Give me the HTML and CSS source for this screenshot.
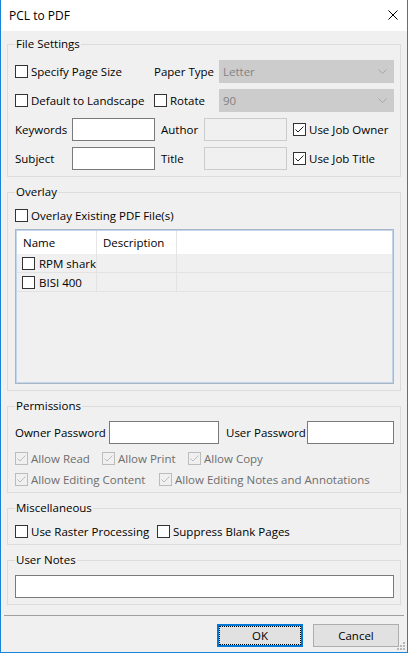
FILE: index.html
```html
<!DOCTYPE html>
<html>
<head>
<meta charset="utf-8">
<title>PCL to PDF</title>
<link rel="stylesheet" href="styles.css">
</head>
<body>
<div class="window">
  <div class="titlebar">
    <span class="title">PCL to PDF</span>
    <svg class="close" width="10" height="10" viewBox="0 0 10 10"><path d="M0.5 0.5 L9.5 9.5 M9.5 0.5 L0.5 9.5" stroke="#000" stroke-width="1" fill="none"/></svg>
  </div>
  <div class="client">
    <fieldset class="group g1">
      <legend>File Settings</legend>
      <div class="rows r1">
        <div class="row">
          <label class="chk w139"><span class="cb"></span><span>Specify Page Size</span></label>
          <span class="lbl w65">Paper Type</span>
          <div class="combo"><span>Letter</span><svg width="9" height="5" viewBox="0 0 9 5"><path d="M0.5 0.5 L4.5 4.5 L8.5 0.5" stroke="#a6a6a6" fill="none"/></svg></div>
        </div>
        <div class="row">
          <label class="chk w139"><span class="cb"></span><span>Default to Landscape</span></label>
          <label class="chk w65"><span class="cb"></span><span>Rotate</span></label>
          <div class="combo"><span>90</span><svg width="9" height="5" viewBox="0 0 9 5"><path d="M0.5 0.5 L4.5 4.5 L8.5 0.5" stroke="#a6a6a6" fill="none"/></svg></div>
        </div>
        <div class="row">
          <span class="lbl w57">Keywords</span>
          <div class="tb w83"></div>
          <span class="lbl w43 ml6">Author</span>
          <div class="tb w83 dis"></div>
          <label class="chk ml6"><span class="cb"><svg width="11" height="11" viewBox="0 0 11 11"><path d="M1.5 5.5 L4 8 L9.5 2.5" stroke="#222" fill="none"/></svg></span><span>Use Job Owner</span></label>
        </div>
        <div class="row">
          <span class="lbl w57">Subject</span>
          <div class="tb w83"></div>
          <span class="lbl w43 ml6">Title</span>
          <div class="tb w83 dis"></div>
          <label class="chk ml6"><span class="cb"><svg width="11" height="11" viewBox="0 0 11 11"><path d="M1.5 5.5 L4 8 L9.5 2.5" stroke="#222" fill="none"/></svg></span><span>Use Job Title</span></label>
        </div>
      </div>
    </fieldset>

    <fieldset class="group g2">
      <legend>Overlay</legend>
      <div class="rows r2">
        <div class="crow">
          <label class="chk"><span class="cb"></span><span>Overlay Existing PDF File(s)</span></label>
        </div>
        <div class="list">
          <div class="list-inner">
            <div class="lv-head">
              <div class="cell c1">Name</div>
              <div class="cell c2">Description</div>
              <div class="cell c3"></div>
            </div>
            <div class="lv-row">
              <div class="cell c1"><span class="cb"></span><span>RPM shark</span></div>
              <div class="cell c2"></div>
              <div class="cell c3"></div>
            </div>
            <div class="lv-row">
              <div class="cell c1"><span class="cb"></span><span>BISI 400</span></div>
              <div class="cell c2"></div>
              <div class="cell c3"></div>
            </div>
          </div>
        </div>
      </div>
    </fieldset>

    <fieldset class="group g3">
      <legend>Permissions</legend>
      <div class="rows r3">
        <div class="row">
          <span class="lbl w94">Owner Password</span>
          <div class="tb w110"></div>
          <span class="lbl w81 ml7">User Password</span>
          <div class="tb grow"></div>
        </div>
        <div class="crow first">
          <label class="chk dis w87"><span class="cb"><svg width="11" height="11" viewBox="0 0 11 11"><path d="M1.5 5.5 L4 8 L9.5 2.5" stroke="#bcbcbc" fill="none"/></svg></span><span>Allow Read</span></label>
          <label class="chk dis w86"><span class="cb"><svg width="11" height="11" viewBox="0 0 11 11"><path d="M1.5 5.5 L4 8 L9.5 2.5" stroke="#bcbcbc" fill="none"/></svg></span><span>Allow Print</span></label>
          <label class="chk dis"><span class="cb"><svg width="11" height="11" viewBox="0 0 11 11"><path d="M1.5 5.5 L4 8 L9.5 2.5" stroke="#bcbcbc" fill="none"/></svg></span><span>Allow Copy</span></label>
        </div>
        <div class="crow second">
          <label class="chk dis w144"><span class="cb"><svg width="11" height="11" viewBox="0 0 11 11"><path d="M1.5 5.5 L4 8 L9.5 2.5" stroke="#bcbcbc" fill="none"/></svg></span><span>Allow Editing Content</span></label>
          <label class="chk dis"><span class="cb"><svg width="11" height="11" viewBox="0 0 11 11"><path d="M1.5 5.5 L4 8 L9.5 2.5" stroke="#bcbcbc" fill="none"/></svg></span><span>Allow Editing Notes and Annotations</span></label>
        </div>
      </div>
    </fieldset>

    <fieldset class="group g4">
      <legend>Miscellaneous</legend>
      <div class="rows r4">
        <div class="crow">
          <label class="chk w142"><span class="cb"></span><span>Use Raster Processing</span></label>
          <label class="chk"><span class="cb"></span><span>Suppress Blank Pages</span></label>
        </div>
      </div>
    </fieldset>

    <fieldset class="group g5">
      <legend>User Notes</legend>
      <div class="rows r5">
        <div class="tb full"></div>
      </div>
    </fieldset>

    <div class="separator"></div>

    <div class="buttons">
      <button class="btn default">OK</button>
      <button class="btn">Cancel</button>
    </div>
  </div>
  <svg class="grip" width="8" height="8" viewBox="0 0 8 8">
    <rect x="6" y="0" width="2" height="2" fill="#b8b8b8"/>
    <rect x="3" y="3" width="2" height="2" fill="#b8b8b8"/>
    <rect x="6" y="3" width="2" height="2" fill="#b8b8b8"/>
    <rect x="0" y="6" width="2" height="2" fill="#b8b8b8"/>
    <rect x="3" y="6" width="2" height="2" fill="#b8b8b8"/>
    <rect x="6" y="6" width="2" height="2" fill="#b8b8b8"/>
  </svg>
</div>
</body>
</html>
```

FILE: styles.css
```css
* { box-sizing: border-box; }
html, body { margin: 0; padding: 0; }
body {
  width: 408px;
  height: 653px;
  overflow: hidden;
  font-family: "Open Sans", "Noto Sans", sans-serif;
  font-size: 11.5px;
  color: #000;
  background: #f0f0f0;
}
.window {
  position: relative;
  width: 408px;
  height: 653px;
  border: 1px solid #1883d7;
  border-top: none;
  background: #f0f0f0;
  display: flex;
  flex-direction: column;
}
.titlebar {
  height: 31px;
  flex: none;
  background: #fff;
  display: flex;
  align-items: center;
  justify-content: space-between;
  padding: 0 9px 0 8px;
  font-size: 12px;
}
.close { display: block; margin-top: -1px; }
.client { display: flex; flex-direction: column; }

.group {
  margin: 7px 6px 0;
  padding: 0 6px 6px 7px;
  border: 1px solid #dcdcdc;
  min-width: 0;
}
.g1 { margin-top: 5px; }
.g3, .g4 { padding-bottom: 4px; }
.group legend {
  padding: 0 1px;
  margin: 0;
  height: 16px;
  line-height: 16px;
}
.rows { display: flex; flex-direction: column; }
.r1 { padding-top: 8px; gap: 6px; }
.r2 { padding-top: 6px; }
.r3 { padding-top: 7px; }
.r4 { padding-top: 6px; }
.r5 { padding-top: 7px; }

.row { display: flex; align-items: center; height: 23px; }
.crow { display: flex; align-items: center; height: 18px; }
.r3 .crow.first { margin-top: 5px; }
.r3 .crow.second { margin-top: 3px; }

.lbl { white-space: nowrap; flex: none; }
.chk { display: flex; align-items: center; white-space: nowrap; flex: none; }
.chk .cb { margin-right: 3px; }
.chk.dis { color: #6d6d6d; }

.cb {
  display: inline-flex;
  flex: none;
  width: 13px;
  height: 13px;
  border: 1px solid #333;
  background: #fff;
}
.cb svg { display: block; }
.chk.dis .cb { border-color: #bcbcbc; background: #f0f0f0; }

.w139 { width: 139px; }
.w65 { width: 65px; }
.w57 { width: 57px; }
.w83 { width: 83px; }
.w43 { width: 43px; }
.w94 { width: 94px; }
.w110 { width: 110px; }
.w81 { width: 81px; }
.w87 { width: 87px; }
.w86 { width: 86px; }
.w144 { width: 144px; }
.w142 { width: 142px; }
.ml6 { margin-left: 6px; }
.ml7 { margin-left: 7px; }
.grow { flex: 1; }

.combo {
  flex: 1;
  height: 23px;
  background: #cccccc;
  border: 1px solid #cccccc;
  color: #838383;
  display: flex;
  align-items: center;
  justify-content: space-between;
  padding: 0 6px 0 3px;
}
.combo svg { display: block; }

.tb {
  flex: none;
  height: 23px;
  border: 1px solid #7a7a7a;
  background: #fff;
}
.tb.dis { background: #f0f0f0; border-color: #cccccc; }
.tb.grow { flex: 1; }
.tb.full { width: 100%; }

.list {
  margin-top: 5px;
  height: 155px;
  border: 1px solid #a9b6c6;
}
.list-inner {
  height: 100%;
  border: 1px solid #c3d5ec;
  background: #f0f0f0;
}
.lv-head, .lv-row {
  display: grid;
  grid-template-columns: 80px 80px 1fr;
}
.lv-head { height: 23px; background: #fff; }
.lv-head .cell { border-right: 1px solid #e5e5e5; padding-left: 6px; }
.lv-head .c3 { border-right: none; }
.lv-row { height: 19px; border-bottom: 1px solid #e3e3e3; }
.lv-row .cell { border-right: 1px solid #e3e3e3; }
.lv-row .c3 { border-right: none; }
.cell { display: flex; align-items: center; overflow: hidden; white-space: nowrap; }
.lv-row .c1 { padding-left: 5px; }
.lv-row .c1 .cb { margin-right: 4px; }

.separator {
  margin: 10px 3px 0;
  height: 1px;
  background: #a0a0a0;
}
.buttons {
  display: flex;
  justify-content: flex-end;
  gap: 10px;
  padding-right: 8px;
  margin-top: 8px;
}
.btn {
  width: 86px;
  height: 23px;
  font-family: "Open Sans", "Noto Sans", sans-serif;
  font-size: 11.5px;
  color: #000;
  background: #e1e1e1;
  border: 1px solid #adadad;
  padding: 0;
  margin: 0;
}
.btn.default {
  border: 2px solid #0078d7;
  outline: 1px dotted #000;
  outline-offset: -3px;
}
.grip {
  position: absolute;
  right: 2px;
  bottom: 2px;
}
```
